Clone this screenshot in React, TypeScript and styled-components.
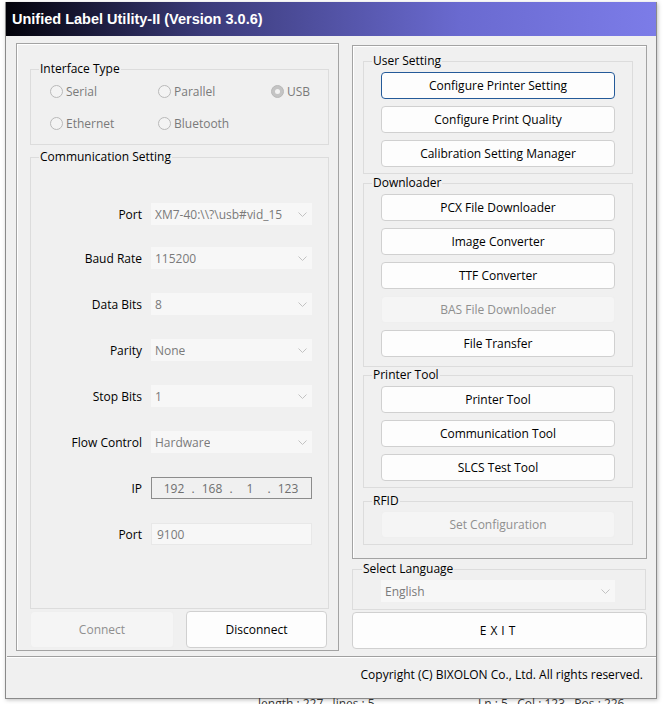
import { FC } from "react";
import styled, { createGlobalStyle } from "styled-components";

const GlobalStyle = createGlobalStyle`
  html, body {
    margin: 0;
    padding: 0;
    background: #ffffff;
    overflow: hidden;
  }
  * {
    box-sizing: border-box;
  }
`;

const uiFont = `"Open Sans", "Noto Sans", sans-serif`;

type RowProps = { label: string; value: string };

const Chevron: FC = () => (
  <svg width="9" height="5" viewBox="0 0 9 5">
    <polyline points="0.5,0.5 4.5,4.5 8.5,0.5" fill="none" stroke="#c2c2c2" strokeWidth="1" />
  </svg>
);

const Radio: FC<{ label: string; checked?: boolean }> = ({ label, checked }) => (
  <RadioItem>
    <svg width="13" height="13" viewBox="0 0 13 13">
      <circle cx="6.5" cy="6.5" r="6" fill={checked ? "#c4c4c4" : "#f3f3f3"} stroke="#b8b8b8" />
      {checked && <circle cx="6.5" cy="6.5" r="2.5" fill="#f2f2f2" />}
    </svg>
    <span>{label}</span>
  </RadioItem>
);

const SelectRow: FC<RowProps> = ({ label, value }) => (
  <Row>
    <RowLabel>{label}</RowLabel>
    <Combo>
      <ComboText>{value}</ComboText>
      <Chevron />
    </Combo>
  </Row>
);

const App: FC = () => {
  const comboRows: RowProps[] = [
    { label: "Port", value: "XM7-40:\\\\?\\usb#vid_15" },
    { label: "Baud Rate", value: "115200" },
    { label: "Data Bits", value: "8" },
    { label: "Parity", value: "None" },
    { label: "Stop Bits", value: "1" },
    { label: "Flow Control", value: "Hardware" },
  ];
  const ip = ["192", "168", "1", "123"];

  return (
    <Desktop>
      <GlobalStyle />
      <Window>
        <TitleBar>Unified Label Utility-II (Version 3.0.6)</TitleBar>

        <Body>
          <LeftFrame>
            <Group $mx="0 9px 0 13px">
              <Legend>Interface Type</Legend>
              <RadioGrid>
                <Radio label="Serial" />
                <Radio label="Parallel" />
                <Radio label="USB" checked />
                <Radio label="Ethernet" />
                <Radio label="Bluetooth" />
              </RadioGrid>
            </Group>

            <CommGroup>
              <Legend>Communication Setting</Legend>
              <Rows>
                {comboRows.map((r) => (
                  <SelectRow key={r.label} label={r.label} value={r.value} />
                ))}
                <Row>
                  <RowLabel>IP</RowLabel>
                  <IpBox>
                    {ip.map((part, i) => (
                      <IpPart key={i}>
                        {i > 0 && <Dot>.</Dot>}
                        <Octet>{part}</Octet>
                      </IpPart>
                    ))}
                  </IpBox>
                </Row>
                <Row>
                  <RowLabel>Port</RowLabel>
                  <TextBox>9100</TextBox>
                </Row>
              </Rows>
            </CommGroup>

            <ButtonRow>
              <Button $w={144} $h={37} disabled>
                Connect
              </Button>
              <Button $w={141} $h={37}>
                Disconnect
              </Button>
            </ButtonRow>
          </LeftFrame>

          <RightColumn>
            <RightFrame>
              <Group $mx="0 13px 0 10px">
                <Legend>User Setting</Legend>
                <Stack>
                  <Button $focused>Configure Printer Setting</Button>
                  <Button>Configure Print Quality</Button>
                  <Button>Calibration Setting Manager</Button>
                </Stack>
              </Group>
              <Group $mx="1px 13px 0 10px">
                <Legend>Downloader</Legend>
                <Stack $pb={9}>
                  <Button>PCX File Downloader</Button>
                  <Button>Image Converter</Button>
                  <Button>TTF Converter</Button>
                  <Button disabled>BAS File Downloader</Button>
                  <Button>File Transfer</Button>
                </Stack>
              </Group>
              <Group $mx="0 13px 0 10px">
                <Legend>Printer Tool</Legend>
                <Stack>
                  <Button>Printer Tool</Button>
                  <Button>Communication Tool</Button>
                  <Button>SLCS Test Tool</Button>
                </Stack>
              </Group>
              <Group $mx="5px 13px 0 10px">
                <Legend>RFID</Legend>
                <Stack $pt={2}>
                  <Button disabled>Set Configuration</Button>
                </Stack>
              </Group>
            </RightFrame>

            <LangGroup>
              <Legend $ml={9}>Select Language</Legend>
              <LangCombo>
                <ComboText>English</ComboText>
                <Chevron />
              </LangCombo>
            </LangGroup>

            <Button $w={295} $h={37} $spaced>
              EXIT
            </Button>
          </RightColumn>
        </Body>

        <Separator />
        <Footer>Copyright (C) BIXOLON Co., Ltd. All rights reserved.</Footer>
      </Window>

      <StatusBar>
        <StatusCell $w={220}>length : 227&nbsp;&nbsp;&nbsp;lines : 5</StatusCell>
        <StatusCell>Ln : 5&nbsp;&nbsp;&nbsp;Col : 123&nbsp;&nbsp;&nbsp;Pos : 226</StatusCell>
      </StatusBar>
    </Desktop>
  );
};

export default App;

const Desktop = styled.div`
  width: 663px;
  height: 704px;
  overflow: hidden;
  padding: 2px 0 0 5px;
  background: #ffffff;
  font-family: ${uiFont};
  font-size: 12px;
  color: #000;
`;

const Window = styled.div`
  width: 652px;
  height: 697px;
  display: flex;
  flex-direction: column;
  background: #f0f0f0;
  border: 1px solid #8a8a8a;
  border-top: none;
  box-shadow: 1px 1px 4px rgba(0, 0, 0, 0.25);
`;

const TitleBar = styled.div`
  height: 34px;
  display: flex;
  align-items: center;
  padding-left: 6px;
  background: linear-gradient(90deg, #02020a 0%, #3a3a78 30%, #6a6ad0 70%, #7c7ce8 100%);
  color: #ffffff;
  font-family: "Liberation Sans", Arial, sans-serif;
  font-weight: bold;
  font-size: 14.5px;
`;

const Body = styled.div`
  display: flex;
  gap: 13px;
  padding: 7px 0 0 10px;
`;

const LeftFrame = styled.div`
  width: 323px;
  height: 608px;
  display: flex;
  flex-direction: column;
  padding-top: 17px;
  border: 1px solid #a3a3a3;
  box-shadow: inset 1px 1px 0 #ffffff;
`;

const Group = styled.fieldset<{ $mx?: string }>`
  margin: ${(p) => p.$mx || "0"};
  padding: 0;
  border: 1px solid #dcdcdc;
  min-width: 0;
`;

const Legend = styled.legend<{ $ml?: number }>`
  margin-left: ${(p) => p.$ml ?? 8}px;
  padding: 0 1px;
  line-height: 16px;
  font-size: 12px;
  color: #000;
`;

const RadioGrid = styled.div`
  display: grid;
  grid-template-columns: 108px 113px auto;
  grid-auto-rows: 20px;
  row-gap: 12px;
  padding: 4px 0 11px 19px;
`;

const RadioItem = styled.div`
  display: flex;
  align-items: center;
  gap: 3px;
  color: #7a7a7a;
`;

const CommGroup = styled(Group)`
  height: 460px;
  margin: 4px 9px 0 13px;
`;

const Rows = styled.div`
  display: flex;
  flex-direction: column;
  gap: 24px;
  padding-top: 38px;
`;

const Row = styled.div`
  display: flex;
  align-items: center;
  height: 22px;
  gap: 9px;

  &:first-child {
    margin-bottom: -2px;
  }
`;

const RowLabel = styled.div`
  width: 111px;
  text-align: right;
`;

const Combo = styled.div`
  width: 161px;
  height: 22px;
  display: flex;
  align-items: center;
  justify-content: space-between;
  padding: 0 5px 0 4px;
  background: #f7f7f7;
  color: #7a7a7a;
`;

const ComboText = styled.span`
  white-space: nowrap;
  overflow: hidden;
`;

const IpBox = styled.div`
  width: 161px;
  height: 22px;
  display: flex;
  align-items: center;
  padding-left: 7px;
  border: 1px solid #8c8c8c;
  color: #6f6f6f;
`;

const IpPart = styled.div`
  display: flex;
  align-items: center;
`;

const Dot = styled.span`
  width: 8px;
  text-align: center;
`;

const Octet = styled.span`
  width: 30px;
  text-align: center;
`;

const TextBox = styled.div`
  width: 161px;
  height: 22px;
  display: flex;
  align-items: center;
  padding-left: 5px;
  background: #f7f7f7;
  border: 1px solid #e8e8e8;
  color: #7a7a7a;
`;

const ButtonRow = styled.div`
  display: flex;
  gap: 12px;
  margin: 2px 0 0 13px;
`;

const Button = styled.button<{ $w?: number; $h?: number; $focused?: boolean; $spaced?: boolean }>`
  width: ${(p) => p.$w ?? 234}px;
  height: ${(p) => p.$h ?? 27}px;
  display: flex;
  align-items: center;
  justify-content: center;
  flex-shrink: 0;
  padding: 0;
  font-family: ${uiFont};
  font-size: 12px;
  color: #000;
  letter-spacing: ${(p) => (p.$spaced ? "4px" : "0")};
  background: #fdfdfd;
  border: 1px solid ${(p) => (p.$focused ? "#245a99" : "#d0d0d0")};
  border-radius: 4px;
  cursor: pointer;

  &:disabled {
    background: #f5f5f5;
    border-color: #efefef;
    color: #8f8f8f;
    cursor: default;
  }
`;

const RightColumn = styled.div`
  width: 296px;
  display: flex;
  flex-direction: column;
  padding-top: 2px;
`;

const RightFrame = styled.div`
  width: 295px;
  height: 514px;
  display: flex;
  flex-direction: column;
  padding-top: 7px;
  border: 1px solid #a3a3a3;
  box-shadow: inset 1px 1px 0 #ffffff;
`;

const Stack = styled.div<{ $pt?: number; $pb?: number }>`
  display: flex;
  flex-direction: column;
  gap: 7px;
  padding: ${(p) => p.$pt ?? 3}px 0 ${(p) => p.$pb ?? 6}px 17px;
`;

const LangGroup = styled(Group)`
  width: 294px;
  margin: 2px 0 2px;
  padding: 3px 0 7px 0;
`;

const LangCombo = styled(Combo)`
  width: 234px;
  margin-left: 28px;
`;

const Separator = styled.div`
  height: 2px;
  margin: 5px 0 0 1px;
  border-top: 1px solid #a0a0a0;
  border-bottom: 1px solid #ffffff;
`;

const Footer = styled.div`
  flex: 1;
  display: flex;
  align-items: center;
  justify-content: flex-end;
  padding: 0 13px 8px 0;
  font-size: 12px;
`;

const StatusBar = styled.div`
  display: flex;
  padding-left: 253px;
  margin-top: -4px;
  height: 16px;
  font-size: 12px;
  color: #333;
`;

const StatusCell = styled.div<{ $w?: number }>`
  width: ${(p) => (p.$w ? `${p.$w}px` : "auto")};
  white-space: nowrap;
`;
